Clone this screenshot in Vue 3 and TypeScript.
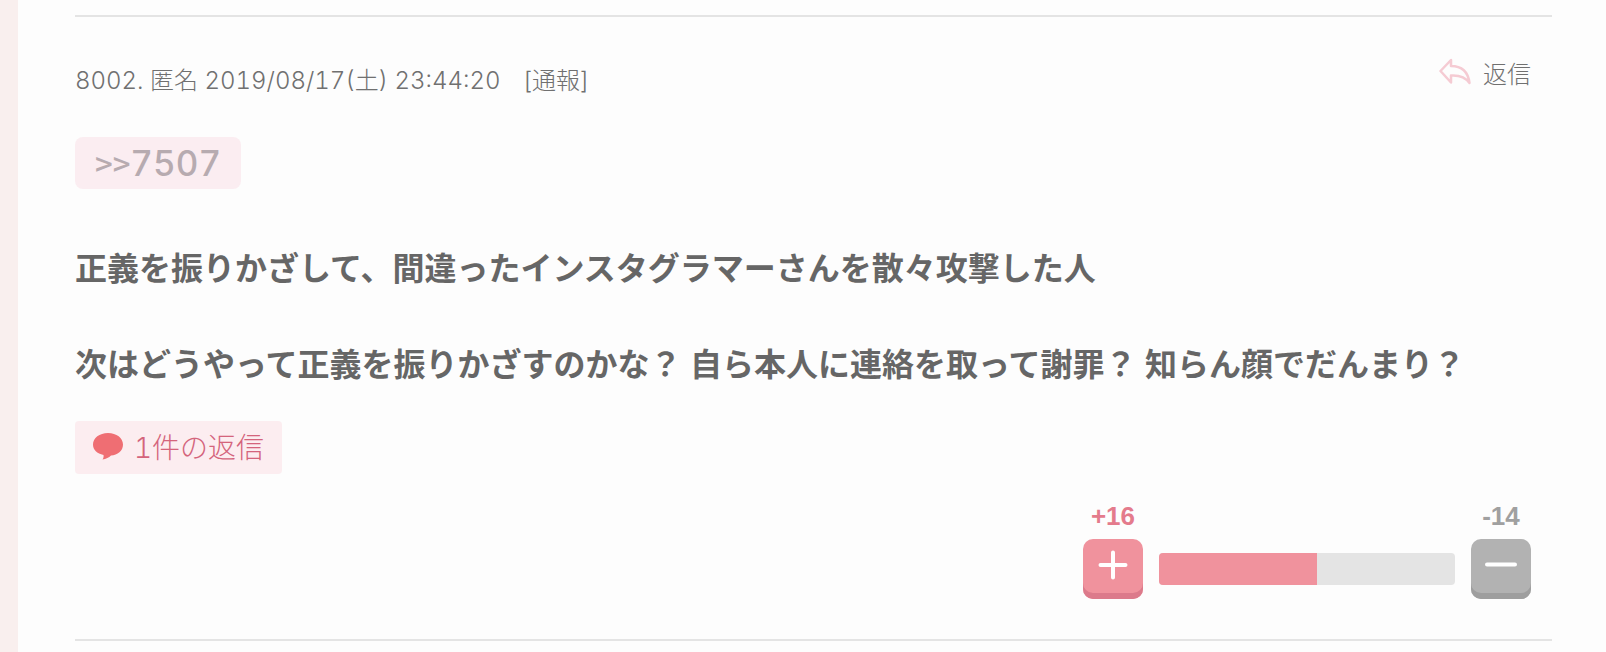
<script setup lang="ts">
import { ref, computed } from 'vue'

const plus = ref(16)
const minus = ref(14)
const ratio = computed(() => (plus.value / (plus.value + minus.value)) * 100 + '%')

const lines: string[] = [
  '正義を振りかざして、間違ったインスタグラマーさんを散々攻撃した人',
  '次はどうやって正義を振りかざすのかな？ 自ら本人に連絡を取って謝罪？ 知らん顔でだんまり？',
]
</script>

<template>
  <main class="page" lang="ja">
    <article class="comment">
      <header class="head">
        <p class="meta">
          <span>8002. 匿名 2019/08/17(土) 23:44:20</span>
          <a class="report" href="#report">[通報]</a>
        </p>
        <button class="reply" type="button">
          <svg class="reply-icon" viewBox="0 0 32 28" aria-hidden="true">
            <path d="M1.5 13 L12 2 V8 C22 8 29 13 30.500 25 C26 18.500 20 17 12 17.500 V24.500 Z" />
          </svg>
          <span>返信</span>
        </button>
      </header>

      <a class="anchor" href="#comment7507"><span class="arrows">&gt;&gt;</span>7507</a>

      <div class="body">
        <p v-for="line in lines" :key="line">{{ line }}</p>
      </div>

      <a class="replies" href="#replies">
        <svg class="bubble" viewBox="0 0 30 27" aria-hidden="true">
          <path d="M15 0 C23.500 0 30 5 30 11.500 C30 18 24.500 22 18 22.500 C16 24.500 13 26 9.500 26.500 C10.500 25 10.800 23.500 10.500 22 C4 20.500 0 17 0 11.500 C0 5 6.500 0 15 0 Z" />
        </svg>
        <span>1件の返信</span>
      </a>

      <div class="votes">
        <div class="vote plus">
          <span class="count">+{{ plus }}</span>
          <button type="button" aria-label="プラス" @click="plus++">
            <svg viewBox="0 0 32 32" aria-hidden="true"><path d="M3.500 16 H28.500 M16 3.500 V28.500" /></svg>
          </button>
        </div>
        <div class="bar"><div class="fill" :style="{ width: ratio }"></div></div>
        <div class="vote minus">
          <span class="count">-{{ minus }}</span>
          <button type="button" aria-label="マイナス" @click="minus++">
            <svg viewBox="0 0 32 32" aria-hidden="true"><path d="M2 15.500 H30" /></svg>
          </button>
        </div>
      </div>
    </article>
  </main>
</template>

<style>
body {
  margin: 0;
  background: #fdfdfd;
}
</style>

<style scoped>
.page {
  box-sizing: border-box;
  min-height: 100vh;
  padding: 15px 54px 11px 57px;
  border-left: 18px solid #f9efee;
  background: #fdfdfd;
  color: #666;
  font-family: Inter, "Noto Sans CJK JP", sans-serif;
  font-variant-numeric: tabular-nums;
}
.comment {
  display: flex;
  flex-direction: column;
  align-items: flex-start;
  border-top: 2px solid #e4e4e4;
  border-bottom: 2px solid #e4e4e4;
  padding-bottom: 40px;
}
p {
  margin: 0;
}
a {
  text-decoration: none;
}
button {
  border: 0;
  margin: 0;
  padding: 0;
  background: none;
  font: inherit;
  color: inherit;
  cursor: pointer;
}
.head {
  align-self: stretch;
  display: flex;
  justify-content: space-between;
  align-items: flex-start;
  padding: 37px 21px 0 0;
  font-size: 24px;
  font-weight: 300;
  line-height: 42px;
  color: #707070;
}
.meta {
  display: flex;
  gap: 22px;
  padding-top: 6px;
}
.report {
  color: inherit;
}
.reply {
  display: flex;
  align-items: center;
  gap: 12px;
}
.reply-icon {
  width: 32px;
  height: 28px;
  margin-bottom: 6px;
  fill: none;
  stroke: #f5cbd3;
  stroke-width: 2.5;
  stroke-linejoin: round;
}
.anchor {
  margin-top: 35px;
  padding: 0 20px;
  border-radius: 8px;
  background: #fbedf1;
  color: #b7abb0;
  font-size: 35px;
  font-weight: 500;
  line-height: 52px;
}
.arrows {
  font-family: "Noto Sans CJK JP", sans-serif;
  font-size: 31px;
}
.body {
  display: flex;
  flex-direction: column;
  gap: 48px;
  margin-top: 56px;
  font-size: 32px;
  font-weight: 600;
  line-height: 48px;
}
.replies {
  display: flex;
  align-items: center;
  gap: 11px;
  margin-top: 32px;
  padding: 2px 18px 0;
  border-radius: 4px;
  background: #fcedf0;
  color: #d4647c;
  font-size: 28px;
  font-weight: 300;
  line-height: 51px;
}
.bubble {
  width: 30px;
  height: 27px;
  margin-bottom: 5px;
  fill: #ef6e73;
}
.votes {
  align-self: flex-end;
  display: flex;
  align-items: flex-end;
  gap: 16px;
  margin: 27px 21px 0 0;
}
.vote {
  display: flex;
  flex-direction: column;
  align-items: center;
  gap: 8px;
}
.count {
  font-family: "Liberation Sans", sans-serif;
  font-size: 26px;
  font-weight: 700;
  line-height: 30px;
}
.vote button {
  display: flex;
  justify-content: center;
  align-items: center;
  box-sizing: border-box;
  width: 60px;
  height: 60px;
  border-radius: 10px;
  padding-bottom: 8px;
}
.vote svg {
  width: 32px;
  height: 32px;
  stroke: #fff;
  stroke-width: 4;
  stroke-linecap: round;
}
.plus {
  color: #e47b8c;
}
.plus button {
  background: #f0929d;
  box-shadow: inset 0 -6px #dc7a8b;
}
.minus {
  color: #a0a0a0;
}
.minus button {
  background: #b2b2b2;
  box-shadow: inset 0 -6px #9e9e9e;
}
.bar {
  width: 296px;
  height: 32px;
  margin-bottom: 14px;
  border-radius: 4px;
  background: #e4e4e4;
  overflow: hidden;
}
.fill {
  height: 100%;
  background: #f0929d;
}
</style>
